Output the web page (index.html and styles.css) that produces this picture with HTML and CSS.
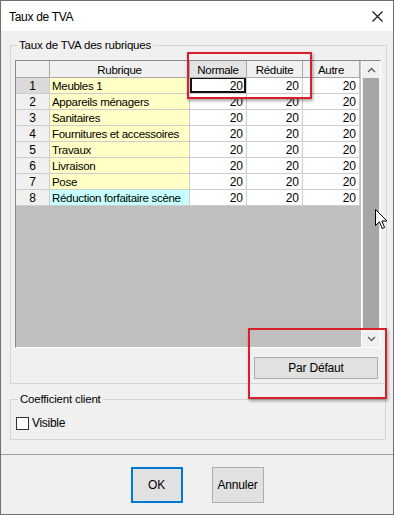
FILE: index.html
```html
<!DOCTYPE html>
<html lang="fr">
<head>
    <meta charset="UTF-8">
    <meta name="viewport" content="width=device-width, initial-scale=1.0">
    <title>Taux de TVA</title>
    <link rel="stylesheet" href="styles.css">
</head>
<body>
    <div class="window">
        <div class="titlebar">
            <span class="title">Taux de TVA</span>
            <svg class="close" width="11" height="11" viewBox="0 0 11 11">
                <path d="M0.5 0.5 L10.5 10.5 M10.5 0.5 L0.5 10.5" stroke="#111" stroke-width="1.1" fill="none"/>
            </svg>
        </div>

        <div class="content">
            <fieldset class="group group-rates">
                <legend>Taux de TVA des rubriques</legend>

                <div class="grid">
                    <div class="sheet">
                        <div class="row head">
                            <div class="cell num"></div>
                            <div class="cell">Rubrique</div>
                            <div class="cell active">Normale</div>
                            <div class="cell">Réduite</div>
                            <div class="cell">Autre</div>
                        </div>
                        <div class="row">
                            <div class="cell num current">1</div>
                            <div class="cell name">Meubles 1</div>
                            <div class="cell val focus">20</div>
                            <div class="cell val">20</div>
                            <div class="cell val">20</div>
                        </div>
                        <div class="row">
                            <div class="cell num">2</div>
                            <div class="cell name">Appareils ménagers</div>
                            <div class="cell val">20</div>
                            <div class="cell val">20</div>
                            <div class="cell val">20</div>
                        </div>
                        <div class="row">
                            <div class="cell num">3</div>
                            <div class="cell name">Sanitaires</div>
                            <div class="cell val">20</div>
                            <div class="cell val">20</div>
                            <div class="cell val">20</div>
                        </div>
                        <div class="row">
                            <div class="cell num">4</div>
                            <div class="cell name">Fournitures et accessoires</div>
                            <div class="cell val">20</div>
                            <div class="cell val">20</div>
                            <div class="cell val">20</div>
                        </div>
                        <div class="row">
                            <div class="cell num">5</div>
                            <div class="cell name">Travaux</div>
                            <div class="cell val">20</div>
                            <div class="cell val">20</div>
                            <div class="cell val">20</div>
                        </div>
                        <div class="row">
                            <div class="cell num">6</div>
                            <div class="cell name">Livraison</div>
                            <div class="cell val">20</div>
                            <div class="cell val">20</div>
                            <div class="cell val">20</div>
                        </div>
                        <div class="row">
                            <div class="cell num">7</div>
                            <div class="cell name">Pose</div>
                            <div class="cell val">20</div>
                            <div class="cell val">20</div>
                            <div class="cell val">20</div>
                        </div>
                        <div class="row">
                            <div class="cell num">8</div>
                            <div class="cell name special">Réduction forfaitaire scène</div>
                            <div class="cell val">20</div>
                            <div class="cell val">20</div>
                            <div class="cell val">20</div>
                        </div>
                    </div>

                    <div class="vscroll">
                        <div class="arrow">
                            <svg width="9" height="6" viewBox="0 0 9 6"><path d="M1 5 L4.5 1.5 L8 5" stroke="#606060" stroke-width="1.4" fill="none"/></svg>
                        </div>
                        <div class="track"><div class="thumb"></div></div>
                        <div class="arrow">
                            <svg width="9" height="6" viewBox="0 0 9 6"><path d="M1 1 L4.5 4.5 L8 1" stroke="#606060" stroke-width="1.4" fill="none"/></svg>
                        </div>
                    </div>
                </div>

                <div class="actions">
                    <button class="btn btn-default">Par Défaut</button>
                </div>
            </fieldset>

            <fieldset class="group group-coef">
                <legend>Coefficient client</legend>
                <label class="check"><span class="box"></span>Visible</label>
            </fieldset>
        </div>

        <div class="footer">
            <button class="btn btn-big btn-ok">OK</button>
            <button class="btn btn-big">Annuler</button>
        </div>

        <!-- red marks drawn over the screenshot -->
        <div class="mark mark-cols"></div>
        <div class="mark mark-default"></div>

        <svg class="cursor" width="13" height="21" viewBox="0 0 13 21">
            <path d="M0.5 0.5 L0.5 16.5 L4.5 12.8 L7.2 19.5 L9.6 18.5 L6.9 12 L12 12 Z" fill="#fff" stroke="#000" stroke-width="1"/>
        </svg>
    </div>
</body>
</html>
```

FILE: styles.css
```css
body {
    margin: 0;
    padding: 0;
    background: #fff;
    font-family: 'Liberation Sans', Arial, sans-serif;
    font-size: 11px;
    color: #000;
}

.window {
    position: relative;
    width: 394px;
    height: 515px;
    box-sizing: border-box;
    border: 1px solid #6f6f6f;
    background-color: #f0f0f0;
    display: flex;
    flex-direction: column;
}

.titlebar {
    height: 30px;
    background-color: #fff;
    display: flex;
    align-items: center;
    justify-content: space-between;
    padding: 0 10px 0 8px;
}

.title {
    font-size: 12px;
    letter-spacing: -0.3px;
    padding-top: 1px;
}

.content {
    height: 423px;
    padding-top: 6px;
    box-sizing: border-box;
}

.group {
    margin: 0 6px 0 9px;
    border: 1px solid #d6d6d6;
    padding: 7px 5px 4px 4px;
    min-width: 0;
}

.group legend {
    margin-left: 2px;
    padding: 0 2px;
    line-height: 16px;
    font-size: 11.5px;
    letter-spacing: -0.2px;
    color: #000;
}

.grid {
    display: flex;
    height: 288px;
    box-sizing: border-box;
    border-top: 1px solid #8a8a8a;
    border-left: 1px solid #8a8a8a;
    border-right: 1px solid #fff;
    border-bottom: 1px solid #fff;
}

.sheet {
    flex: 1;
    background-color: #bfbfbf;
}

.row {
    display: grid;
    grid-template-columns: 34px 140px 57px 56px 57px;
    height: 16px;
}

.row.head {
    height: 17px;
}

.cell {
    box-sizing: border-box;
    border-right: 1px solid #cdcdcd;
    border-bottom: 1px solid #cdcdcd;
    background-color: #fff;
    line-height: 16px;
    font-size: 11.5px;
    letter-spacing: -0.3px;
    white-space: nowrap;
    overflow: hidden;
}

.head .cell {
    background-color: #f0f0f0;
    border-right-color: #a9a9a9;
    border-bottom-color: #a9a9a9;
    text-align: center;
    line-height: 18px;
}

.head .cell.active {
    background-color: #e3e3e3;
}

.cell.num {
    background-color: #f0f0f0;
    text-align: center;
    font-size: 12px;
    letter-spacing: 0;
}

.cell.num.current {
    background-color: #dadada;
}

.cell.name {
    background-color: #ffffc6;
    padding-left: 2px;
}

.cell.name.special {
    background-color: #c6ffff;
}

.cell.val {
    text-align: right;
    padding-right: 3px;
    font-size: 12px;
    letter-spacing: 0;
}

.cell.focus {
    box-shadow: inset 2px 0 0 #111, inset -2px 0 0 #111, inset 0 1px 0 #111, inset 0 -2px 0 #111;
}

.vscroll {
    width: 18px;
    display: flex;
    flex-direction: column;
    background-color: #f0f0f0;
    border-left: 1px solid #fff;
}

.arrow {
    height: 17px;
    display: flex;
    align-items: center;
    justify-content: center;
}

.track {
    flex: 1;
    display: flex;
    padding: 0 1px 0 1px;
}

.thumb {
    flex: 1;
    background-color: #a6a6a6;
}

.actions {
    display: flex;
    justify-content: flex-end;
    padding: 9px 3px 0 0;
}

.btn {
    font-family: 'Liberation Sans', Arial, sans-serif;
    font-size: 12px;
    letter-spacing: -0.2px;
    color: #000;
    background-color: #e1e1e1;
    border: 1px solid #adadad;
    margin: 0;
    padding: 0;
}

.btn-default {
    width: 124px;
    height: 22px;
}

.group-coef {
    margin-top: 7px;
    margin-right: 7px;
    padding: 8px 5px 8px 5px;
}

.check {
    display: flex;
    align-items: center;
    height: 16px;
    font-size: 12px;
    letter-spacing: -0.3px;
}

.check .box {
    width: 13px;
    height: 13px;
    box-sizing: border-box;
    border: 1px solid #333;
    background-color: #fff;
    margin-right: 3px;
}

.footer {
    flex: 1;
    border-top: 1px solid #a0a0a0;
    display: flex;
    justify-content: center;
    align-items: flex-start;
    gap: 29px;
    padding-top: 12px;
}

.btn-big {
    width: 52px;
    height: 36px;
}

.btn-ok {
    border: 2px solid #0078d7;
}

.mark {
    position: absolute;
    box-sizing: border-box;
    border: 2px solid #d8202b;
    box-shadow: 1px 2px 3px rgba(0, 0, 0, 0.35);
}

.mark-cols {
    left: 186px;
    top: 51px;
    width: 125px;
    height: 47px;
}

.mark-default {
    left: 247px;
    top: 327px;
    width: 139px;
    height: 71px;
}

.cursor {
    position: absolute;
    left: 374px;
    top: 208px;
}
```
